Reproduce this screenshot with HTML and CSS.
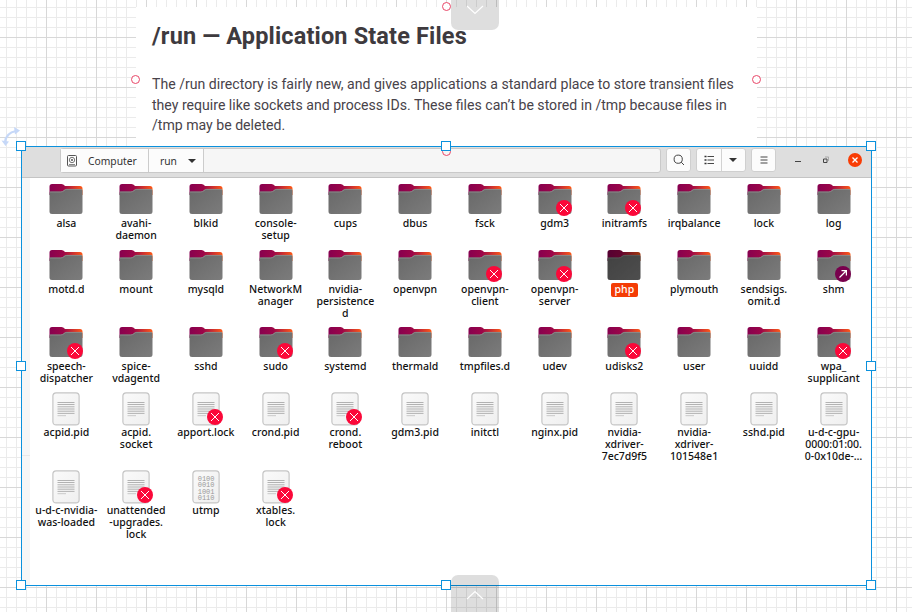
FILE: index.html
```html
<!DOCTYPE html>
<html lang="en">
<head>
<meta charset="utf-8">
<title>Application State Files</title>
<link rel="stylesheet" href="styles.css">
</head>
<body>
<svg width="0" height="0" class="defs">
  <defs>
    <linearGradient id="tab"><stop offset="0" stop-color="#87004f"/><stop offset=".42" stop-color="#9c0648"/><stop offset="1" stop-color="#ff5a16"/></linearGradient>
    <linearGradient id="face" x2="1" y2="1"><stop offset="0" stop-color="#686868"/><stop offset="1" stop-color="#7c7c7c"/></linearGradient>
    <linearGradient id="sheet" x2="1" y2="1"><stop offset="0" stop-color="#fafafa"/><stop offset="1" stop-color="#efefef"/></linearGradient>
    <symbol id="folder" viewBox="0 0 34 34">
      <path fill="url(#tab)" d="M.5 12V3.5Q.5 1 3 1H12.500Q14.500 1 15.500 2.500L16 3H31Q33.500 3 33.500 5.500V12Z"/>
      <path fill="url(#face)" d="M.5 10Q.5 8.600 2 8.600H11.500Q13.500 8.500 14.800 7.200Q16 6 17.500 6H32Q33.500 6 33.500 7.500V28.500Q33.500 31 31 31H3Q.5 31 .5 28.500Z"/>
      <path fill="none" stroke="#979797" stroke-width=".7" d="M1 9H11.500Q13.700 8.900 15 7.600Q16.300 6.400 17.500 6.400H33"/>
    </symbol>
    <symbol id="file" viewBox="0 0 34 34">
      <rect x="3.900" y=".9" width="26.200" height="32" rx="3.200" fill="url(#sheet)" stroke="#c5c5c5" stroke-width="1.200"/>
      <path stroke="#aaa" stroke-width=".9" d="M8.500 10.500H25.500M8.500 12.500H25.500M8.500 14.800H25.500M8.500 17H25.500M8.500 19.200H25.500M8.500 21.400H25.500"/>
      <path stroke="#c9c9c9" d="M8.500 23.700H17"/>
    </symbol>
    <symbol id="binary" viewBox="0 0 34 34">
      <rect x="3.900" y=".9" width="26.200" height="32" rx="3.200" fill="url(#sheet)" stroke="#c5c5c5" stroke-width="1.200"/>
      <g font-family="Liberation Mono, monospace" font-size="7" fill="#999"><text x="8.700" y="10.500">0100</text><text x="8.700" y="17">0010</text><text x="8.700" y="23.500">1001</text><text x="8.700" y="30">0110</text></g>
    </symbol>
    <symbol id="denied" viewBox="0 0 16 16"><circle cx="8" cy="8" r="8" fill="#fb0839"/><path stroke="#fff" stroke-width="1" d="M4 4L12 12M12 4L4 12"/></symbol>
    <symbol id="link" viewBox="0 0 16 16"><circle cx="8" cy="8" r="8" fill="#78004d"/><path fill="none" stroke="#fff" stroke-width="1.200" d="M4.500 11.500L11 5M6.500 4.600H11.400V9.500"/></symbol>
  </defs>
</svg>
<main class="canvas">
  <article class="note">
    <h1>/run — Application State Files</h1>
    <p>The /run directory is fairly new, and gives applications a standard place to store transient files<br>they require like sockets and process IDs. These files can’t be stored in /tmp because files in<br>/tmp may be deleted.</p>
  </article>
  <i class="port port-top"></i><i class="port port-left"></i><i class="port port-right"></i><i class="port port-bottom"></i>

  <section class="window">
    <header class="bar">
      <div class="path">
        <div class="crumb computer"><svg width="12" height="12" viewBox="0 0 12 12" fill="none" stroke="#555"><rect x=".5" y=".5" width="9" height="10.500" rx="1"/><circle cx="5" cy="5" r="2.700" stroke-width=".8"/><circle cx="5" cy="5" r=".7"/><path d="M2 9.500H8" stroke-width=".7"/></svg><span>Computer</span></div>
        <div class="crumb run"><span>run</span><i class="caret"></i></div>
      </div>
      <div class="button"><svg width="12" height="12" viewBox="0 0 12 12" fill="none" stroke="#444" stroke-width="1"><circle cx="5.200" cy="5.200" r="4.100"/><path d="M8.200 8.200L11 11"/></svg></div>
      <div class="button views"><span><svg width="10" height="10" viewBox="0 0 10 10" stroke="#333"><path d="M3.500 1.500H10M3.500 5H10M3.500 8.500H10" stroke-width=".9"/><path d="M.5 1.500H2.500M.5 5H2.500M.5 8.500H2.500" stroke-width="1.600"/></svg></span><span><i class="caret"></i></span></div>
      <div class="button"><svg width="8" height="8" viewBox="0 0 8 8" stroke="#444"><path d="M.5 1H7.500M.5 4H7.500M.5 7H7.500"/></svg></div>
      <div class="controls">
        <svg width="6" height="12" viewBox="0 0 6 12" stroke="#444"><path d="M0 7.500H6"/></svg>
        <svg width="6" height="8" viewBox="0 0 6 8" fill="none" stroke="#444"><path d="M.5 3H4V6.500H.5Z"/><path d="M2 1H5.600V5" stroke="#999" stroke-width=".8"/></svg>
        <svg width="14" height="14" viewBox="0 0 14 14"><circle cx="7" cy="7" r="7" fill="#f93c04"/><path stroke="#fff" stroke-width="1.300" d="M4.500 4.500L9.500 9.500M9.500 4.500L4.500 9.500"/></svg>
      </div>
    </header>
    <div class="body">
      <div class="edge"></div>
      <div class="files" id="files"></div>
    </div>
    <i class="handle nw"></i><i class="handle n"></i><i class="handle ne"></i><i class="handle w"></i><i class="handle e"></i><i class="handle sw"></i><i class="handle s"></i><i class="handle se"></i>
  </section>

  <svg class="rotate" width="22" height="22" viewBox="0 0 22 22"><path d="M5 15Q6 6 16 4" fill="none" stroke="#c6d8f8" stroke-width="2.200"/><path fill="#c6d8f8" d="M14 0L20 3.500L15 7.500ZM1.500 13.500L9 14.500L5.500 19Z"/></svg>
  <div class="pull pull-top"><svg width="18" height="10" viewBox="0 0 18 10"><path d="M1 1L9 8.500L17 1"/></svg></div>
  <div class="pull pull-bottom"><svg width="18" height="10" viewBox="0 0 18 10"><path d="M1 9L9 1.500L17 9"/></svg></div>
</main>
<script src="files.js"></script>
</body>
</html>
```
FILE: styles.css
```css
* { box-sizing: border-box; }
body { margin: 0; width: 912px; height: 612px; overflow: hidden; }
.defs { position: absolute; }
.canvas {
  position: relative; width: 912px; height: 612px; overflow: hidden; padding: 7px 0 0;
  background-color: #fff;
  background-image:
    linear-gradient(90deg, #d8d8d8 1px, transparent 1px), linear-gradient(#d8d8d8 1px, transparent 1px),
    linear-gradient(90deg, #ebebeb 1px, transparent 1px), linear-gradient(#ebebeb 1px, transparent 1px);
  background-size: 50px 50px, 50px 50px, 10px 10px, 10px 10px;
  background-position: 46px 0, 0 37px, 6px 0, 0 7px;
}
.note { width: 621px; height: 139px; margin-left: 136px; padding: 14px 16px 0; background: #fff; font-family: Roboto, sans-serif; color: #3e3a3e; }
.note h1 { margin: 0; font-size: 23.500px; letter-spacing: .15px; line-height: 30px; font-weight: 700; white-space: nowrap; }
.note p { margin: 23px 0 0; font-size: 14.100px; line-height: 20.600px; color: #48434a; white-space: nowrap; }
.port { position: absolute; width: 9px; height: 9px; border: 1px solid #e94768; border-radius: 50%; background: #fff; }
.port-top { left: 442px; top: 2px; }
.port-left { left: 131px; top: 75px; }
.port-right { left: 752px; top: 75px; }
.port-bottom { left: 442px; top: 147px; z-index: 2; background: transparent; }
.window { position: relative; width: 851px; height: 440px; margin-left: 21px; border: 1px solid #0b91dd; background: #fff; font-family: "Noto Sans", sans-serif; display: flex; flex-direction: column; }
.bar { height: 31px; display: flex; align-items: flex-start; padding: 1px 0 0 38px; background: #dedede; border-bottom: 1px solid #c4c4c4; }
.path { width: 601px; height: 25px; display: flex; background: #f6f6f6; border: 1px solid #c9c9c9; border-radius: 3px; margin-right: 5px; }
.crumb { display: flex; align-items: center; background: #fcfcfc; border-right: 1px solid #ccc; font-size: 10.300px; color: #333; }
.computer { width: 88px; padding-left: 6px; gap: 9px; }
.run { width: 55px; padding-left: 11px; gap: 11px; }
.caret { border: 4px solid transparent; border-top-color: #333; border-bottom: 0; }
.button { width: 25px; height: 24px; display: flex; align-items: center; justify-content: center; background: #fcfcfc; border: 1px solid #cfcfcf; border-radius: 3px; margin-right: 5px; }
.views { width: 50px; }
.views span { flex: 1; height: 100%; display: flex; align-items: center; justify-content: center; }
.views span + span { border-left: 1px solid #d2d2d2; }
.controls { height: 24px; display: flex; align-items: center; gap: 22px; margin-left: 14px; }
.controls svg:last-child { margin-left: -3px; }
.body { flex: 1; display: flex; }
.edge { width: 8px; background: linear-gradient(#e8e8e8, #e8e8e8) 0 277px / 8px 1px no-repeat #f6f6f6; }
.files { padding: 5px 0 0 1.500px; display: grid; grid-template-columns: repeat(12, 69.750px); grid-template-rows: 66px 77px 66px 78px 66px; }
.item { display: flex; flex-direction: column; align-items: center; }
.icon { position: relative; width: 34px; height: 34px; }
.icon svg { display: block; }
.icon .badge { position: absolute; left: 18px; top: 17px; }
.label { padding: 0 3px; font-size: 10.500px; line-height: 12.200px; font-weight: 500; color: #111; text-align: center; white-space: nowrap; border-radius: 2px; }
.selected .icon { filter: brightness(.63); }
.selected .label { background: #f43c05; color: #fff; padding: 0 4px 2px; }
.handle { position: absolute; width: 10px; height: 10px; border: 1px solid #0b91dd; background: #fff; z-index: 3; }
.nw, .w, .sw { left: -6px; }
.n, .s { left: 419px; }
.ne, .e, .se { left: 844px; }
.nw, .n, .ne { top: -6px; }
.w, .e { top: 214px; }
.sw, .s, .se { top: 433px; }
.rotate { position: absolute; left: 0; top: 127px; }
.pull { position: absolute; left: 451px; width: 48px; background: rgba(0,0,0,.13); display: flex; justify-content: center; z-index: 4; }
.pull svg { fill: none; stroke: #fff; stroke-width: 1.200; }
.pull-top { top: 0; height: 30px; border-radius: 0 0 7px 7px; padding-top: 5px; }
.pull-bottom { top: 575px; height: 37px; border-radius: 7px 7px 0 0; padding-top: 15px; }
```
FILE: files.js
```js
const rows = [
  ["alsa", "avahi-|daemon", "blkid", "console-|setup", "cups", "dbus", "fsck", "gdm3*", "initramfs*", "irqbalance", "lock", "log"],
  ["motd.d", "mount", "mysqld", "NetworkM|anager", "nvidia-|persistence|d", "openvpn", "openvpn-|client*", "openvpn-|server*", "php", "plymouth", "sendsigs.|omit.d", "shm>"],
  ["speech-|dispatcher*", "spice-|vdagentd", "sshd", "sudo*", "systemd", "thermald", "tmpfiles.d", "udev", "udisks2*", "user", "uuidd", "wpa_|supplicant*"],
  ["acpid.pid", "acpid.|socket", "apport.lock*", "crond.pid", "crond.|reboot*", "gdm3.pid", "initctl", "nginx.pid", "nvidia-|xdriver-|7ec7d9f5", "nvidia-|xdriver-|101548e1", "sshd.pid", "u-d-c-gpu-|0000:01:00.|0-0x10de-…"],
  ["u-d-c-nvidia-|was-loaded", "unattended|-upgrades.|lock*", "utmp", "xtables.|lock*"]
];
const use = (id, size, cls) => `<svg class="${cls}" width="${size}" height="${size}"><use href="#${id}"/></svg>`;
document.getElementById("files").innerHTML = rows.map((row, r) => row.map(entry => {
  const name = entry.replace(/[*>]$/, "");
  const kind = r < 3 ? "folder" : name === "utmp" ? "binary" : "file";
  const badge = entry.endsWith("*") ? use("denied", 16, "badge") : entry.endsWith(">") ? use("link", 16, "badge") : "";
  return `<div class="item${name === "php" ? " selected" : ""}"><div class="icon">${use(kind, 34, "")}${badge}</div><div class="label">${name.replace(/\|/g, "<br>")}</div></div>`;
}).join("")).join("");
```
